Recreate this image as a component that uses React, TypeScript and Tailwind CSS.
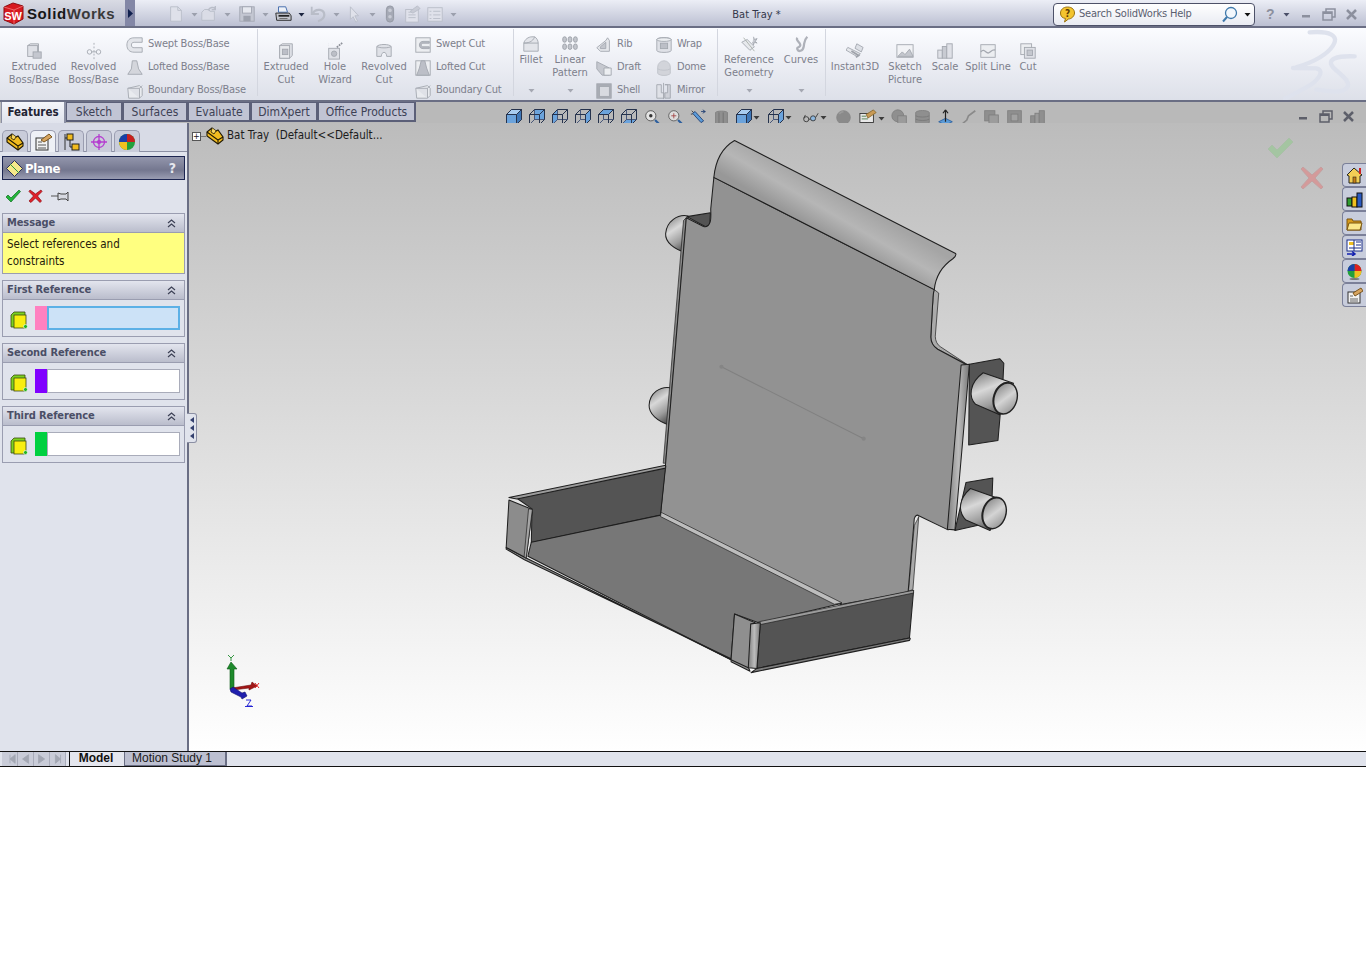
import type { ReactNode } from "react";

const g = { fill: "#dfe1e7", stroke: "#a4a8b0", strokeWidth: 1 };

function Ico({ size = 18, children }: { size?: number; children: ReactNode }) {
  return (
    <svg width={size} height={size} viewBox="0 0 20 20" className="shrink-0">
      {children}
    </svg>
  );
}

const ribbonIcons: Record<string, ReactNode> = {
  extrude: (
    <g {...g}>
      <path d="M3 4l3-2h9v11l-3 3" />
      <rect x="3" y="4" width="11" height="12" />
      <rect x="9" y="11" width="9" height="7" fill="#c4c7cf" />
    </g>
  ),
  revolve: (
    <g {...g} fill="none">
      <path d="M10 1v18" strokeDasharray="2 2" />
      <circle cx="5" cy="11" r="2.500" />
      <circle cx="15" cy="11" r="2.500" />
      <path d="M7 11h6" />
    </g>
  ),
  swept: (
    <g {...g} strokeWidth="1">
      <path d="M18 2H9C4 2 1 5 1 10s3 8 8 8h9v-5H9c-2 0-3-1-3-3s1-3 3-3h9z" fill="#e3e5ea" />
    </g>
  ),
  lofted: (
    <g {...g}>
      <path d="M7 2h5l2 9 4 6H2l4-6z" fill="#d4d6dc" />
    </g>
  ),
  boundary: (
    <g {...g}>
      <path d="M2 7l13-3 3 3v8l-3 3H3z" fill="#e9ebef" />
      <path d="M2 7h13v11M15 7l3-3" />
    </g>
  ),
  extrudeCut: (
    <g {...g}>
      <path d="M3 4l3-2h11v13l-3 3H3z" />
      <rect x="3" y="4" width="11" height="14" fill="#e8eaee" />
      <rect x="6" y="8" width="6" height="6" fill="#bcbfc7" />
    </g>
  ),
  hole: (
    <g {...g}>
      <rect x="3" y="7" width="12" height="12" />
      <circle cx="9" cy="13" r="3" fill="#bcbfc7" />
      <path d="M12 6l6-5" stroke="#8e929a" strokeDasharray="2 1" strokeWidth="2" />
      <path d="M3 2h.1M7 2h.1M3 4h.1" stroke="#8e929a" />
    </g>
  ),
  revolveCut: (
    <g {...g}>
      <path d="M2 5c2-3 14-3 16 0v11h-5c0-6-6-6-6 0H2z" />
      <path d="M2 5c3 2 13 2 16 0" fill="none" />
    </g>
  ),
  sweptCut: (
    <g {...g}>
      <rect x="2" y="2" width="16" height="16" fill="#eceef1" />
      <path d="M17 6H10c-3 0-4 2-4 4s1 4 4 4h7v-2h-7c-1 0-2-1-2-2s1-2 2-2h7z" fill="#b6b9c1" />
    </g>
  ),
  loftedCut: (
    <g {...g}>
      <rect x="2" y="2" width="16" height="16" fill="#eceef1" />
      <path d="M8 2h4l2 8 3 8H3l3-8z" fill="#bcbfc7" />
    </g>
  ),
  fillet: (
    <g {...g}>
      <path d="M2 9C3 5 7 2 11 2h3c2 1 4 4 4 7v9H2z" fill="#e3e5ea" />
      <path d="M2 9c4 0 10-1 12-7" fill="none" />
      <path d="M2 9h16" fill="none" />
    </g>
  ),
  pattern: (
    <g fill="#c3c6cd" stroke="#9a9ea6">
      {[4, 10, 16].map((x) => [5, 13].map((y) => <rect key={`${x}${y}`} x={x - 2} y={y - 3} width="4" height="6" rx="2" />))}
    </g>
  ),
  rib: (
    <g {...g}>
      <path d="M2 13l10-8 2-3 2 3v12H6z" fill="#e5e7eb" />
      <path d="M6 12l6-5v7H6z" fill="#c3c6cd" />
    </g>
  ),
  draft: (
    <g {...g}>
      <path d="M2 3l14 7v8H8L2 11z" fill="#c5c8cf" />
      <path d="M10 10h8v8h-8z" fill="#eceef1" />
    </g>
  ),
  shell: (
    <g {...g}>
      <rect x="2" y="2" width="16" height="16" fill="#a9acb4" />
      <rect x="5" y="5" width="11" height="11" fill="#d8dae0" />
    </g>
  ),
  wrap: (
    <g {...g}>
      <path d="M2 4c0-3 16-3 16 0v12c0 3-16 3-16 0z" />
      <ellipse cx="10" cy="4" rx="8" ry="2" fill="#eceef1" />
      <rect x="6" y="8" width="8" height="6" fill="#bcbfc7" />
    </g>
  ),
  dome: (
    <g {...g} stroke="#c0c3ca">
      <path d="M3 9a7 7 0 0 1 14 0v7c-2 3-12 3-14 0z" fill="#d2d4da" />
      <path d="M3 11c3 2 11 2 14 0" fill="none" />
    </g>
  ),
  mirror: (
    <g {...g}>
      <path d="M2 3h5v9h3v6H2z" />
      <path d="M11 3h6v15h-6v-6h3V3z" fill="#cfd1d8" />
      <path d="M9.500 1v18" />
    </g>
  ),
  refGeom: (
    <g {...g}>
      <path d="M2 8l6-3 8 8-5 4z" fill="#e7e9ed" />
      <path d="M4 3l12 15" stroke="#a9b0a9" />
      <path d="M15 2l1 3 3-1-2 3 2 2-3-1-1 3-1-3" fill="#c6c9d0" />
    </g>
  ),
  curves: (
    <g fill="none" stroke="#aeb1b9" strokeWidth="2.500">
      <path d="M6 3c-3 3 5 6 3 9s-4 1-3 4 6 2 7-3 0-7 4-11" />
    </g>
  ),
  instant: (
    <g {...g}>
      <path d="M2 6l14 7-4 3L0 9z" fill="#e6e8ec" />
      <path d="M12 2l7 4-2 5-7-4z" fill="#dde0e6" />
      <path d="M6 10l8 5-3 2" stroke="#9ea2aa" strokeWidth="2" fill="none" />
    </g>
  ),
  picture: (
    <g {...g}>
      <rect x="1" y="3" width="18" height="14" fill="#f2f3f6" />
      <path d="M2 16l5-5 3 3 5-6 4 8z" fill="#c4c7ce" />
    </g>
  ),
  scale: (
    <g {...g}>
      <rect x="2" y="9" width="5" height="9" />
      <rect x="7" y="5" width="5" height="13" fill="#c8cbd2" />
      <rect x="12" y="2" width="6" height="16" />
    </g>
  ),
  split: (
    <g {...g}>
      <rect x="2" y="3" width="16" height="14" fill="#eceef1" />
      <path d="M2 11c4-5 6 3 9 1s4-4 7-3" fill="none" strokeWidth="1.500" />
    </g>
  ),
  cut: (
    <g {...g}>
      <rect x="2" y="2" width="12" height="12" fill="#eceef1" />
      <rect x="6" y="6" width="12" height="12" />
      <rect x="9" y="9" width="6" height="6" fill="#c4c7ce" />
    </g>
  ),
};

function Caret({ color = "#8f93a0", size = 5 }: { color?: string; size?: number }) {
  return (
    <svg width={size + 2} height={size} viewBox="0 0 7 5" className="shrink-0">
      <path d="M0.500 1h6L3.500 4.500z" fill={color} />
    </svg>
  );
}

function BigBtn({
  w,
  icon,
  lines,
  high,
  caret,
}: {
  w: string;
  icon: string;
  lines: string[];
  high?: boolean;
  caret?: boolean;
}) {
  return (
    <div className={`${w} shrink-0 h-full flex flex-col items-center ${high ? "pt-[6px]" : "pt-[13px]"}`}>
      <Ico>{ribbonIcons[icon]}</Ico>
      {lines.map((l) => (
        <span key={l} className="leading-[13px] whitespace-nowrap">
          {l}
        </span>
      ))}
      {caret && (
        <span className="mt-auto mb-[3px]">
          <Caret color="#a5a8b2" />
        </span>
      )}
    </div>
  );
}

function SmallCol({ w, items }: { w: string; items: [string, string][] }) {
  return (
    <div className={`${w} shrink-0 pt-[4px] flex flex-col`}>
      {items.map(([icon, label]) => (
        <div key={label} className="h-[23px] shrink-0 flex items-center">
          <div className="w-[20px] flex justify-center">
            <Ico>{ribbonIcons[icon]}</Ico>
          </div>
          <span className="ml-[3px] whitespace-nowrap tracking-[-0.2px]">{label}</span>
        </div>
      ))}
    </div>
  );
}

function Ribbon() {
  return (
    <div className="h-[74px] pt-px flex border-b-2 border-[#6a6e84] bg-linear-to-b from-[#fbfcff] to-[#dde0e9] text-[#7d808c] text-[11px] overflow-hidden">
      <div className="w-[258px] shrink-0 pl-[5px] flex border-r border-[#d3d6df] mb-[4px]">
        <BigBtn w="w-[58px]" icon="extrude" lines={["Extruded", "Boss/Base"]} />
        <BigBtn w="w-[61px]" icon="revolve" lines={["Revolved", "Boss/Base"]} />
        <SmallCol
          w="ml-px w-[132px]"
          items={[
            ["swept", "Swept Boss/Base"],
            ["lofted", "Lofted Boss/Base"],
            ["boundary", "Boundary Boss/Base"],
          ]}
        />
      </div>
      <div className="w-[256px] shrink-0 flex border-r border-[#d3d6df] mb-[4px]">
        <BigBtn w="w-[56px]" icon="extrudeCut" lines={["Extruded", "Cut"]} />
        <BigBtn w="w-[42px]" icon="hole" lines={["Hole", "Wizard"]} />
        <BigBtn w="w-[56px]" icon="revolveCut" lines={["Revolved", "Cut"]} />
        <SmallCol
          w="ml-px w-[100px]"
          items={[
            ["sweptCut", "Swept Cut"],
            ["loftedCut", "Lofted Cut"],
            ["boundary", "Boundary Cut"],
          ]}
        />
      </div>
      <div className="w-[204px] shrink-0 flex border-r border-[#d3d6df] mb-[4px]">
        <BigBtn w="w-[34px]" icon="fillet" lines={["Fillet"]} high caret />
        <BigBtn w="w-[44px]" icon="pattern" lines={["Linear", "Pattern"]} high caret />
        <SmallCol
          w="ml-[2px] w-[60px]"
          items={[
            ["rib", "Rib"],
            ["draft", "Draft"],
            ["shell", "Shell"],
          ]}
        />
        <SmallCol
          w="w-[60px]"
          items={[
            ["wrap", "Wrap"],
            ["dome", "Dome"],
            ["mirror", "Mirror"],
          ]}
        />
      </div>
      <div className="w-[108px] shrink-0 flex border-r border-[#d3d6df] mb-[4px]">
        <BigBtn w="w-[62px]" icon="refGeom" lines={["Reference", "Geometry"]} high caret />
        <BigBtn w="w-[42px]" icon="curves" lines={["Curves"]} high caret />
      </div>
      <div className="pl-[3px] flex">
        <BigBtn w="w-[52px]" icon="instant" lines={["Instant3D"]} />
        <BigBtn w="w-[48px]" icon="picture" lines={["Sketch", "Picture"]} />
        <BigBtn w="w-[32px]" icon="scale" lines={["Scale"]} />
        <BigBtn w="w-[54px]" icon="split" lines={["Split Line"]} />
        <BigBtn w="w-[26px]" icon="cut" lines={["Cut"]} />
      </div>
      <svg width="74" height="71" viewBox="730 90 222 213" className="ml-auto mr-[9px] shrink-0" fill="none" stroke="#dee2ed" strokeWidth="13" strokeLinecap="round">
        <path d="M810 100c60-5 90 10 70 40-20 30-60 50-110 65" />
        <path d="M760 207l70 1c30 7 0 42-30 57l-65 35" />
        <path d="M945 172c-55-2-85 8-65 33 20 20 60 45 40 63-20 17-60 7-90 4" />
      </svg>
    </div>
  );
}

function Cube({ face }: { face: string }) {
  const blue = "#6ba3dc";
  return (
    <svg width="16" height="16" viewBox="0 0 16 16" className="shrink-0" fill="none" stroke="#26334d" strokeWidth="1">
      {face === "back" && <rect x="5.500" y="0.500" width="10" height="10" fill={blue} />}
      {face === "bottom" && <path d="M0.500 15.500l5-5h10l-5 5z" fill={blue} />}
      {face === "left" && <path d="M0.500 5.500l5-5v10l-5 5z" fill={blue} />}
      <path d="M0.500 5.500l5-5h10v10l-5 5h-10z" />
      <path d="M5.500 0.500v10h10M5.500 10.500l-5 5" stroke="#49587a" />
      <path d="M0.500 5.500h10v10M10.500 5.500l5-5" />
      {face === "front" && <rect x="0.500" y="5.500" width="10" height="10" fill={blue} />}
      {face === "front" && <path d="M0.500 5.500l5-5h10l-5 5z" fill="#a9cdf0" />}
      {face === "front" && <path d="M10.500 5.500l5-5v10l-5 5z" fill="#3f78b8" />}
      {face === "right" && <path d="M10.500 5.500l5-5v10l-5 5z" fill={blue} />}
      {face === "top" && <path d="M0.500 5.500l5-5h10l-5 5z" fill={blue} />}
    </svg>
  );
}

const grey = { fill: "#8f8f8f", stroke: "#7e7e7e" };

const headsUp: { w: string; icon: ReactNode; caret?: boolean }[] = [
  { w: "w-[23px]", icon: <Cube face="front" /> },
  { w: "w-[23px]", icon: <Cube face="back" /> },
  { w: "w-[23px]", icon: <Cube face="left" /> },
  { w: "w-[23px]", icon: <Cube face="right" /> },
  { w: "w-[23px]", icon: <Cube face="top" /> },
  { w: "w-[23px]", icon: <Cube face="bottom" /> },
  {
    w: "w-[23px]",
    icon: (
      <Ico size={17}>
        <circle cx="8" cy="8" r="6" fill="#e4e4e4" stroke="#4a4a4a" />
        <circle cx="8" cy="8" r="2" fill="#333" />
        <path d="M13 13l5 5" stroke="#2d5f9e" strokeWidth="2.500" />
      </Ico>
    ),
  },
  {
    w: "w-[23px]",
    icon: (
      <Ico size={17}>
        <circle cx="8" cy="8" r="6" fill="#ddd" stroke="#555" />
        <path d="M5 8h6M8 5v6" stroke="#a04040" />
        <path d="M13 13l5 5" stroke="#2d5f9e" strokeWidth="2.500" />
      </Ico>
    ),
  },
  {
    w: "w-[23px]",
    icon: (
      <Ico size={17}>
        <path d="M3 5l10 11 3-2L6 3z" fill="#5b9bd8" stroke="#1e3c70" />
        <path d="M13 3h5M18 3l-3-2M18 3l-3 2" stroke="#1e3c70" fill="none" />
        <path d="M2 2l2 2M1 6h2" stroke="#333" />
      </Ico>
    ),
  },
  {
    w: "w-[23px]",
    icon: (
      <Ico size={17}>
        <path d="M3 4c2-2 12-2 14 0v13c-2 2-12 2-14 0z" {...grey} />
        <path d="M7 4v14M12 4v14" stroke="#707070" />
      </Ico>
    ),
  },
  {
    w: "w-[32px]",
    caret: true,
    icon: <Cube face="front" />,
  },
  {
    w: "w-[34px]",
    caret: true,
    icon: <Cube face="right" />,
  },
  {
    w: "w-[33px]",
    caret: true,
    icon: (
      <Ico size={17}>
        <circle cx="5" cy="12" r="3" fill="none" stroke="#333" />
        <circle cx="13" cy="11" r="3" fill="#8eb8e0" stroke="#333" />
        <path d="M8 12h2M16 10l3-5M2 11l2-4" stroke="#333" fill="none" />
      </Ico>
    ),
  },
  {
    w: "w-[24px]",
    icon: (
      <Ico size={17}>
        <circle cx="10" cy="10" r="8" fill="#8a8a8a" stroke="#858585" />
        <path d="M5 6a6 6 0 0 1 5-3" stroke="#9b9b9b" fill="none" strokeWidth="2" />
      </Ico>
    ),
  },
  {
    w: "w-[32px]",
    caret: true,
    icon: (
      <Ico size={18}>
        <rect x="1" y="5" width="15" height="10" fill="#e8e8e8" stroke="#333" />
        <path d="M5 19h7M8 15v4" stroke="#333" />
        <path d="M8 6l8-5 3 3-9 6z" fill="#c99a55" stroke="#8a6a30" />
        <path d="M3 8h5M3 11h7" stroke="#4d7d4d" />
      </Ico>
    ),
  },
  {
    w: "w-[23px]",
    icon: (
      <Ico size={17}>
        <circle cx="8" cy="8" r="7" {...grey} />
        <rect x="8" y="8" width="10" height="10" fill="#9b9b9b" stroke="#7e7e7e" />
      </Ico>
    ),
  },
  {
    w: "w-[23px]",
    icon: (
      <Ico size={17}>
        <path d="M2 4c2-3 14-3 16 0v12c-2 3-14 3-16 0z" {...grey} />
        <path d="M2 8c3 2 13 2 16 0M2 12c3 2 13 2 16 0" fill="none" stroke="#777" />
      </Ico>
    ),
  },
  {
    w: "w-[23px]",
    icon: (
      <Ico size={17}>
        <path d="M2 15l8-4 8 4-8 4z" fill="#5b9bd8" stroke="#2b5f9e" />
        <path d="M10 15V2M10 1l-3 4M10 1l3 4" stroke="#222" fill="none" strokeWidth="1.400" />
      </Ico>
    ),
  },
  {
    w: "w-[23px]",
    icon: (
      <Ico size={17}>
        <path d="M2 18l6-5 2-5 8-6" stroke="#8a8a8a" strokeWidth="2" fill="none" />
      </Ico>
    ),
  },
  {
    w: "w-[23px]",
    icon: (
      <Ico size={17}>
        <rect x="2" y="2" width="12" height="12" {...grey} />
        <rect x="7" y="7" width="11" height="11" fill="#9c9c9c" stroke="#7e7e7e" />
      </Ico>
    ),
  },
  {
    w: "w-[23px]",
    icon: (
      <Ico size={17}>
        <rect x="2" y="2" width="16" height="16" {...grey} />
        <rect x="6" y="6" width="8" height="8" fill="#a2a2a2" stroke="#7e7e7e" />
      </Ico>
    ),
  },
  {
    w: "w-[23px]",
    icon: (
      <Ico size={17}>
        <rect x="2" y="8" width="5" height="10" {...grey} />
        <rect x="7" y="5" width="5" height="13" fill="#9b9b9b" stroke="#7e7e7e" />
        <rect x="12" y="2" width="6" height="16" {...grey} />
      </Ico>
    ),
  },
];

function WindowButtons({ color }: { color: string }) {
  return (
    <div className="flex items-center gap-[9px]">
      <svg width="13" height="13" viewBox="0 0 13 13">
        <rect x="2" y="7" width="8" height="2.500" fill={color} />
      </svg>
      <svg width="14" height="13" viewBox="0 0 14 13" fill="none" stroke={color} strokeWidth="1.500">
        <rect x="1" y="4" width="9" height="8" />
        <path d="M4 4V1h9v8h-3" />
        <path d="M1 5h9" strokeWidth="2" />
      </svg>
      <svg width="13" height="13" viewBox="0 0 13 13" stroke={color} strokeWidth="2.500">
        <path d="M2 2l9 9M11 2l-9 9" />
      </svg>
    </div>
  );
}

function TitleBar() {
  const tool = "#b9bdc8";
  const items: { w: string; icon: ReactNode; caret?: string }[] = [
    {
      w: "w-[33px]",
      caret: "#9ca0ad",
      icon: (
        <Ico>
          <path d="M4 2h8l4 4v12H4z" fill="#dfe1ea" stroke={tool} />
          <path d="M12 2v4h4" fill="none" stroke={tool} />
        </Ico>
      ),
    },
    {
      w: "w-[38px]",
      caret: "#9ca0ad",
      icon: (
        <Ico>
          <path d="M2 8l3-3h5l1 2h5v10H2z" fill="#dadce6" stroke={tool} />
          <path d="M9 6c2-4 6-4 8-2M17 1v4h-4" fill="none" stroke={tool} strokeWidth="1.500" />
        </Ico>
      ),
    },
    {
      w: "w-[36px]",
      caret: "#9ca0ad",
      icon: (
        <Ico>
          <rect x="2" y="2" width="16" height="16" fill="#c4c7d2" stroke="#a3a7b3" />
          <rect x="5" y="2" width="10" height="7" fill="#e6e8ef" stroke="#a3a7b3" />
          <rect x="6" y="12" width="8" height="6" fill="#9ea2ae" />
        </Ico>
      ),
    },
    {
      w: "w-[35px]",
      caret: "#1c2540",
      icon: (
        <Ico>
          <path d="M5 2h8l2 6H5z" fill="#eef1f7" stroke="#3a64a8" />
          <path d="M2 9h15l2 3v5H3z" fill="#c5c7cf" stroke="#222" />
          <path d="M5 12h12" stroke="#222" strokeWidth="2" />
          <path d="M6 15h9" stroke="#666" />
        </Ico>
      ),
    },
    {
      w: "w-[36px]",
      caret: "#9ca0ad",
      icon: (
        <Ico>
          <path d="M3 2v8h8" fill="none" stroke={tool} strokeWidth="2" />
          <path d="M4 9c4-6 13-4 13 2 0 4-4 6-7 7" fill="none" stroke={tool} strokeWidth="2.500" />
        </Ico>
      ),
    },
    {
      w: "w-[36px]",
      caret: "#9ca0ad",
      icon: (
        <Ico>
          <path d="M6 2v14l3-3 3 6 2-1-3-6h4z" fill="#dfe1ea" stroke={tool} />
        </Ico>
      ),
    },
    {
      w: "w-[22px]",
      icon: (
        <Ico>
          <rect x="6" y="1" width="8" height="18" rx="4" fill="#a5a9b5" stroke="#9296a2" />
          <circle cx="10" cy="6" r="2" fill="#c8cbd5" />
          <circle cx="10" cy="13" r="2" fill="#c8cbd5" />
        </Ico>
      ),
    },
    {
      w: "w-[23px]",
      icon: (
        <Ico>
          <rect x="3" y="5" width="14" height="14" fill="#dfe1ea" stroke={tool} />
          <path d="M6 8h4M6 11h8M6 14h8" stroke={tool} />
          <path d="M8 7l8-6 3 3-8 5z" fill="#c8cbd5" stroke={tool} />
        </Ico>
      ),
    },
    {
      w: "w-[30px]",
      caret: "#9ca0ad",
      icon: (
        <Ico>
          <rect x="2" y="3" width="16" height="15" fill="#dfe1ea" stroke={tool} />
          <path d="M4 7h2M8 7h8M4 11h2M8 11h8M4 15h2M8 15h8" stroke={tool} />
        </Ico>
      ),
    },
  ];
  return (
    <div className="h-[28px] flex items-center border-b-2 border-[#6a6e84] bg-linear-to-b from-[#eceef6] to-[#bcc0d2] text-[#33374a]">
      <div className="w-[125px] h-full shrink-0 flex items-center bg-linear-to-b from-[#d9dbe4] to-[#b6b9cb]">
        <svg width="23" height="23" viewBox="0 0 23 23" className="ml-[2px] shrink-0">
          <path d="M2 5l9-4 10 3v13l-9 5-10-4z" fill="#d7191f" stroke="#8e0e12" />
          <path d="M2 5l10 3 9-4M12 8v14" fill="none" stroke="#f48a8a" strokeWidth=".7" />
          <text x="11" y="18" textAnchor="middle" fontSize="11" fontWeight="700" fill="#fff" fontFamily="Liberation Sans, sans-serif">
            SW
          </text>
        </svg>
        <span className="ml-[2px] text-[15px] leading-none font-bold tracking-[0.6px] font-['Liberation_Sans',sans-serif] text-[#161616]">
          Solid<span className="text-[#3a3a3a]">Works</span>
        </span>
      </div>
      <div className="w-[10px] h-full shrink-0 bg-[#8387a6] flex items-center justify-center">
        <svg width="5" height="9" viewBox="0 0 5 9">
          <path d="M0 0l5 4.500L0 9z" fill="#10204e" />
        </svg>
      </div>
      <div className="ml-[32px] mt-[2px] flex items-center">
        {items.map((it, i) => (
          <div key={i} className={`${it.w} shrink-0 flex items-center`}>
            {it.icon}
            {it.caret && (
              <span className="ml-[6px]">
                <Caret color={it.caret} />
              </span>
            )}
          </div>
        ))}
      </div>
      <div className="flex-1 mt-[5px] pl-[4px] text-center text-[11px] text-[#33374a] whitespace-nowrap">Bat Tray *</div>
      <div className="w-[202px] h-[23px] mt-[2px] shrink-0 flex items-center rounded-[4px] border border-[#4d5168] bg-linear-to-b from-white to-[#e9ebf2]">
        <svg width="17" height="17" viewBox="0 0 17 17" className="ml-[5px] shrink-0">
          <path d="M8.500 1c5 0 7 3 7 6s-3 6-6 6l-4 3 1-3.500C3 12 1.500 10 1.500 7S4 1 8.500 1z" fill="#f3c42e" stroke="#9a7310" />
          <text x="8.500" y="11" textAnchor="middle" fontSize="10" fontWeight="700" fill="#5a3b05">
            ?
          </text>
        </svg>
        <span className="ml-[3px] mt-[1px] text-[11px] tracking-[-0.2px] text-[#5a5e70] whitespace-nowrap">Search SolidWorks Help</span>
        <svg width="17" height="17" viewBox="0 0 17 17" className="ml-auto shrink-0" fill="none">
          <circle cx="10" cy="7" r="5.500" fill="#f2f7fc" stroke="#3f79ab" strokeWidth="1.300" />
          <path d="M6 11l-4 4.500" stroke="#3f79ab" strokeWidth="2" />
        </svg>
        <span className="ml-[6px] mr-[3px]">
          <Caret color="#111" />
        </span>
      </div>
      <span className="ml-[11px] mt-[2px] w-[17px] text-[14px] font-bold leading-none text-[#8c909e] font-['Liberation_Sans',sans-serif]">?</span>
      <span className="mt-[2px]">
        <Caret color="#4a4f68" />
      </span>
      <div className="ml-[10px] mr-[8px] mt-[2px]">
        <WindowButtons color="#8c909e" />
      </div>
    </div>
  );
}

function TabsRow() {
  const tabs = [
    ["Sketch", "w-[57px]"],
    ["Surfaces", "w-[65px]"],
    ["Evaluate", "w-[63px]"],
    ["DimXpert", "w-[67px]"],
    ["Office Products", "w-[98px]"],
  ];
  return (
    <div className="h-[21px] flex bg-[#b9b9b9] text-[12px]">
      <div className="ml-px w-[65px] h-[21px] flex items-center justify-center bg-linear-to-b from-[#f4f5fa] to-[#e0e3ec] border-l border-r-2 border-[#8b8fa3] text-[11.500px] font-bold text-[#1f2333]">
        Features
      </div>
      {tabs.map(([t, w]) => (
        <div key={t} className={`${w} h-[20px] flex items-center justify-center bg-[#c1c4d4] border border-r-2 border-b-2 border-[#5b5f78] text-[#3d4155]`}>
          {t}
        </div>
      ))}
      <div className="ml-[90px] mt-[7px] flex items-start h-[17px]">
        {headsUp.map((h, i) => (
          <div key={i} className={`${h.w} shrink-0 flex items-center`}>
            {h.icon}
            {h.caret && (
              <span className="ml-px">
                <Caret color="#3c3c3c" />
              </span>
            )}
          </div>
        ))}
      </div>
      <div className="ml-auto mr-[11px] mt-[8px] h-[13px]">
        <WindowButtons color="#5d5f6a" />
      </div>
    </div>
  );
}

function PartIcon({ size = 18 }: { size?: number }) {
  return (
    <svg width={size} height={size} viewBox="0 0 18 18" className="shrink-0">
      <path d="M1 5l5-4 4 3 2-1 5 7v3l-5 4-11-8z" fill="#f1bb1f" stroke="#1f1804" strokeWidth="1.100" />
      <path d="M1 5l11 8v4M12 13l5-3" fill="none" stroke="#1f1804" strokeWidth="1.100" />
      <path d="M6 1l-1 4 3 2 2-3" fill="#f8d660" stroke="#1f1804" strokeWidth=".8" />
    </svg>
  );
}

function RefGroup({ title, swatch, active }: { title: string; swatch: string; active?: boolean }) {
  return (
    <GroupBox title={title}>
      <div className="h-[36px] pt-[6px] flex">
        <svg width="18" height="18" viewBox="0 0 18 18" className="ml-[7px] mr-[7px] mt-[5px] shrink-0">
          <path d="M1 4l3-3h11v3l-4 12H1z" fill="#7cd120" stroke="#3a4a10" strokeWidth=".8" />
          <rect x="4" y="4" width="12" height="13" fill="#f8ee10" stroke="#3a4a10" strokeWidth=".8" />
          <circle cx="15.500" cy="15.500" r="2" fill="#22b322" stroke="#fff" strokeWidth=".6" />
        </svg>
        <div className={`w-[12px] h-[24px] shrink-0 ${swatch}`} />
        <div
          className={`w-[133px] h-[24px] shrink-0 ${
            active ? "bg-[#cce2f7] border border-[#5cb0e6] outline outline-[#5cb0e6] -outline-offset-2" : "bg-white border border-[#a9acba]"
          }`}
        />
      </div>
    </GroupBox>
  );
}

function GroupBox({ title, children }: { title: string; children: ReactNode }) {
  return (
    <div className="ml-[2px] w-[183px] mb-[6px] border border-[#9a9db0]">
      <div className="h-[19px] flex items-center justify-between pl-[4px] pr-[8px] border-b border-[#9a9db0] bg-linear-to-b from-[#e3e5ee] to-[#babdcc] text-[11px] tracking-[-0.1px] font-bold text-[#4a4e66]">
        {title}
        <svg width="9" height="9" viewBox="0 0 9 9" fill="none" stroke="#3c4055" strokeWidth="1.200">
          <path d="M1 4l3.500-3L8 4M1 8l3.500-3L8 8" />
        </svg>
      </div>
      {children}
    </div>
  );
}

function LeftPanel() {
  const tabIcons: ReactNode[] = [
    <PartIcon key="a" />,
    <svg key="b" width="18" height="18" viewBox="0 0 18 18">
      <rect x="2" y="5" width="12" height="12" fill="#f2f2f2" stroke="#333" />
      <path d="M4 9h4M4 12h8M4 15h8" stroke="#555" />
      <path d="M7 7l8-6 3 3-8 5z" fill="#d7a45f" stroke="#7a5620" />
    </svg>,
    <svg key="c" width="18" height="18" viewBox="0 0 18 18">
      <path d="M3 1v16" stroke="#333" />
      <rect x="5" y="1" width="6" height="6" fill="#f1bb1f" stroke="#222" />
      <rect x="10" y="11" width="7" height="6" fill="#f1bb1f" stroke="#222" />
      <path d="M8 7v7h2M3 5h2" stroke="#222" fill="none" />
    </svg>,
    <svg key="d" width="18" height="18" viewBox="0 0 18 18" fill="none" stroke="#b53fd0" strokeWidth="1.300">
      <circle cx="9" cy="9" r="5.500" />
      <path d="M9 1v16M1 9h16" />
      <circle cx="9" cy="9" r="1.500" fill="#b53fd0" />
    </svg>,
    <svg key="e" width="18" height="18" viewBox="0 0 18 18">
      <circle cx="9" cy="9" r="8" fill="#22a03c" />
      <path d="M9 1a8 8 0 0 1 8 8H9z" fill="#c82020" />
      <path d="M1 9a8 8 0 0 1 8-8v8z" fill="#1c3fa8" />
      <path d="M1 9h8v8a8 8 0 0 1-8-8z" fill="#f0c020" />
    </svg>,
  ];
  return (
    <div className="relative z-10 w-[189px] shrink-0 h-full border-r-2 border-[#6a6e84] bg-[#e0e3ec] text-[12px]">
      <div className="h-[29px] pt-[7px] pl-[2px] flex gap-[2px] border-b border-[#8b8fa3] bg-[#d8dbe6]">
        {tabIcons.map((ic, i) => (
          <div
            key={i}
            className={`w-[26px] h-[22px] flex items-center justify-center rounded-t-[5px] border border-b-0 border-[#9a9db0] ${
              i === 1 ? "bg-[#eef0f6]" : "bg-[#c9ccda]"
            }`}
          >
            {ic}
          </div>
        ))}
      </div>
      <div className="ml-[2px] mt-[4px] w-[183px] h-[24px] flex items-center border border-[#1c2550] bg-[linear-gradient(#9396ac,#74778f_60%,#9a9db2)] text-white">
        <svg width="19" height="19" viewBox="0 0 19 19" className="ml-[2px] shrink-0">
          <path d="M9.500 1.500l8 8-8 8-8-8z" fill="#f6e98a" stroke="#2b3058" />
          <path d="M5 5l9 9" stroke="#2f9a3a" />
        </svg>
        <span className="ml-px mt-[2px] text-[13px] font-bold tracking-[-0.3px]">Plane</span>
        <span className="ml-auto mr-[8px] text-[14px] font-bold text-[#e6e7ee]">?</span>
      </div>
      <div className="h-[33px] flex items-center pl-[5px] pb-[2px] gap-[7px]">
        <svg width="16" height="14" viewBox="0 0 16 14">
          <path d="M1 8l2-2 3 3 8-8 1.500 1.500L6 13z" fill="#22b53a" stroke="#0d6d1f" strokeWidth=".7" />
        </svg>
        <svg width="15" height="14" viewBox="0 0 15 14">
          <path d="M2 1l5.500 4L13 1l1 1.500L9.500 7l4 5-1.500 1.500L7.500 9 3 13.500 1 12l4.500-5L1 2.500z" fill="#e0202a" stroke="#8a0c12" strokeWidth=".7" />
        </svg>
        <svg width="19" height="12" viewBox="0 0 19 12" className="ml-[1px]">
          <path d="M0 6h7" stroke="#555" />
          <path d="M7 3l3 1h5l2-2v9l-2-2h-5l-3 1z" fill="#d8dae2" stroke="#444" />
        </svg>
      </div>
      <GroupBox title="Message">
        <div className="h-[40px] bg-[#ffff80] pl-[4px] pr-2 pt-[3px] leading-[17px] text-[#26200a] text-[11.500px]">
          Select references and constraints
        </div>
      </GroupBox>
      <RefGroup title="First Reference" swatch="bg-[#ff80c0]" active />
      <RefGroup title="Second Reference" swatch="bg-[#8000ff]" />
      <RefGroup title="Third Reference" swatch="bg-[#00d040]" />
      {/* collapse handle sits over the sash */}
      <div className="absolute left-[187px] top-[290px] w-[10px] h-[30px] flex flex-col items-center justify-center gap-[2px] rounded-r-[3px] border border-l-0 border-[#8b8fa3] bg-[#e0e3ec]">
        {[0, 1, 2].map((i) => (
          <svg key={i} width="4" height="6" viewBox="0 0 4 6">
            <path d="M4 0v6L0 3z" fill="#33406e" />
          </svg>
        ))}
      </div>
    </div>
  );
}

function Boss({ cx, cy, body }: { cx: number; cy: number; body: string }) {
  const line = { stroke: "#1f1f1f", strokeWidth: 3, strokeLinejoin: "round" as const };
  return (
    <>
      <path d={body} fill="url(#cyl)" {...line} />
      <ellipse cx={cx} cy={cy} rx="36" ry="48" transform={`rotate(18 ${cx} ${cy})`} fill="#222" />
      <ellipse cx={cx + 1} cy={cy} rx="31" ry="43" transform={`rotate(18 ${cx} ${cy})`} fill="url(#end)" />
    </>
  );
}

function Model() {
  const line = { stroke: "#1f1f1f", strokeWidth: 3, strokeLinejoin: "round" as const };
  const dark = "#545454";
  return (
    <svg width="540" height="550" viewBox="0 0 1568 1568" preserveAspectRatio="none" className="absolute left-[301px] top-[7px]">
      <defs>
        <linearGradient id="curl" gradientUnits="userSpaceOnUse" x1="1030" y1="190" x2="970" y2="295">
          <stop offset="0" stopColor="#a5a5a5" />
          <stop offset="0.5" stopColor="#b6b6b6" />
          <stop offset="1" stopColor="#989898" />
        </linearGradient>
        <linearGradient id="cyl" x1="0.3" y1="0" x2="0.7" y2="1">
          <stop offset="0" stopColor="#8c8c8c" />
          <stop offset="0.35" stopColor="#d8d8d8" />
          <stop offset="0.7" stopColor="#9d9d9d" />
          <stop offset="1" stopColor="#4e4e4e" />
        </linearGradient>
        <linearGradient id="end" x1="0" y1="0" x2="1" y2="1">
          <stop offset="0" stopColor="#7f7f7f" />
          <stop offset="0.5" stopColor="#d4d4d4" />
          <stop offset="1" stopColor="#8a8a8a" />
        </linearGradient>
        <linearGradient id="strip" x1="0" y1="0" x2="1" y2="0">
          <stop offset="0" stopColor="#7d7d7d" />
          <stop offset="0.5" stopColor="#bcbcbc" />
          <stop offset="1" stopColor="#777" />
        </linearGradient>
      </defs>

      {/* left pins, behind the plate */}
      <path d="M575 245c-30-6-62 15-65 50-2 25 25 45 60 55z" fill="url(#cyl)" {...line} />
      <path d="M525 735c-30-6-62 15-63 50-1 25 25 45 55 55z" fill="url(#cyl)" {...line} />
      <path d="M572 247l68-11-2 35-12 5z" fill={dark} {...line} />

      {/* right tabs */}
      <path d="M1392 668l88-16 12 13-3 60-14 160-85 13z" fill={dark} {...line} />
      <path d="M1382 1005l78-13-2 50-18 80-90 20z" fill={dark} {...line} />

      {/* plate thickness, seen along the cut edges */}
      <path d="M570 250l-60 700h-7l59-692z" fill="#8a8a8a" {...line} strokeWidth={2} />
      <path d="M1290 455l13 10-10 123c0 12 5 24 15 30l77 50-85-43c-15-10-20-20-20-35l5-90c2-15 0-30 5-45z" fill="#aaa" {...line} strokeWidth={2} />
      <path d="M1232 1128c3-8 8-13 13-26l-17 208-13 5z" fill="#aaa" {...line} strokeWidth={2} />

      {/* back plate */}
      <path
        d="M650 135L1290 455c-5 15-3 30-5 45l-5 90c0 15 5 25 20 35l85 45-55 470-85-40c-5-5-10 0-13 8l-18 210-195 35L495 1095l15-145 60-700 50 25c10 3 15-3 18-10 5-5 3-30 3-40z"
        fill="#929292"
        {...line}
      />

      {/* top curl */}
      <path d="M710 30L1352 352c3 5-2 10-8 15-30 20-50 50-54 88L650 135c5-50 25-85 60-105z" fill="url(#curl)" {...line} />

      {/* side strip */}
      <path d="M1368 670l24-2-42 472-22-2z" fill="url(#strip)" {...line} />

      {/* bosses on the right */}
      <Boss cx={1496} cy={765} body="M1432 692l88 30-40 90-70-30c-20-20-20-60 22-90z" />
      <Boss cx={1464} cy={1092} body="M1395 1022l92 32-35 88-70-30c-25-25-20-62 13-90z" />

      {/* tray floor and walls */}
      <path d="M78 1050l432-92-15 140-375 78 2-96z" fill={dark} {...line} />
      <path d="M55 1048l455-92v8L78 1052z" fill="#9c9c9c" {...line} />
      <path d="M495 1098l525 252-240 55-70-25-10 130-590-295 10-40z" fill="#777" {...line} />
      <path d="M497 1090l525 258-22 4-505-250z" fill="#bdbdbd" {...line} strokeWidth={2} />
      <path d="M47 1190l58 30 595 290v6l55 27-5-12L100 1225 47 1195z" fill="#8f8f8f" {...line} />
      <path d="M55 1055l68 27-18 138-58-30z" fill="#8c8c8c" {...line} />
      <path d="M112 1080l11 2-18 138-6-3z" fill="#a5a5a5" {...line} strokeWidth={2} />

      {/* front wall */}
      <path d="M785 1405l445-92-12 135-443 87z" fill={dark} {...line} />
      <path d="M780 1402l450-90v8L785 1410z" fill="#9c9c9c" {...line} strokeWidth={2} />
      <path d="M775 1535l443-87c3 0 3 3 0 7l-460 92z" fill="#7d7d7d" {...line} />
      <path d="M710 1380l60 25-20 128-50-23z" fill="#8f8f8f" {...line} />
      <path d="M757 1408l28-3-10 130-25-2z" fill="url(#strip)" {...line} />

      {/* sketch line */}
      <path d="M672 675L1085 880" stroke="#808080" strokeWidth="3" />
      <circle cx="672" cy="675" r="6" fill="#858585" />
      <circle cx="1085" cy="880" r="6" fill="#858585" />
    </svg>
  );
}

function TaskPane() {
  const icons: ReactNode[] = [
    <svg key="h" width="17" height="17" viewBox="0 0 17 17">
      <path d="M8 1L1 8l2 1v7h11V9l2-1z" fill="#f3cf55" stroke="#222" />
      <rect x="7" y="10" width="3" height="6" fill="#c77f12" stroke="#222" strokeWidth=".6" />
      <rect x="13" y="1" width="2" height="6" fill="#c22" />
    </svg>,
    <svg key="r" width="17" height="17" viewBox="0 0 17 17">
      <rect x="1" y="7" width="5" height="8" fill="#2f9c2f" stroke="#111" />
      <rect x="6" y="6" width="5" height="10" fill="#f0c020" stroke="#111" />
      <rect x="11" y="2" width="5" height="14" fill="#2a5ac0" stroke="#111" />
    </svg>,
    <svg key="f" width="17" height="17" viewBox="0 0 17 17">
      <path d="M1 4h5l1 2h8v9H1z" fill="#d69a1c" stroke="#7a5510" />
      <path d="M3 8h13l-2 7H1z" fill="#fbe78c" stroke="#7a5510" />
    </svg>,
    <svg key="v" width="17" height="17" viewBox="0 0 17 17">
      <rect x="1" y="1" width="15" height="11" fill="#fff" stroke="#1b2f88" />
      <rect x="3" y="3" width="5" height="3" fill="#f0c020" />
      <path d="M10 3h5M10 6h5M3 9h12M8 1v11" stroke="#1b2f88" />
      <path d="M1 15h7M6 12.500l3 2.500-3 2" stroke="#1320b0" strokeWidth="1.500" fill="none" />
    </svg>,
    <svg key="a" width="17" height="17" viewBox="0 0 17 17">
      <circle cx="8.500" cy="8" r="7" fill="#22a03c" />
      <path d="M8.500 1a7 7 0 0 1 7 7h-7z" fill="#e02020" />
      <path d="M1.500 8a7 7 0 0 1 7-7v7z" fill="#1c3fa8" />
      <path d="M8.500 8h7a7 7 0 0 1-7 7z" fill="#f0c020" />
      <ellipse cx="8.500" cy="16" rx="5" ry="1" fill="#777" />
    </svg>,
    <svg key="c" width="17" height="17" viewBox="0 0 17 17">
      <rect x="2" y="5" width="12" height="11" fill="#f2f2f2" stroke="#333" />
      <path d="M4 9h3M4 12h8M4 14h8" stroke="#666" />
      <path d="M7 6l8-5 2 3-8 5z" fill="#d7a45f" stroke="#7a5620" />
    </svg>,
  ];
  return (
    <div className="absolute right-0 top-[40px] flex flex-col">
      {icons.map((ic, i) => (
        <div key={i} className="w-[24px] h-[24px] flex items-center justify-center rounded-l-[4px] border border-r-0 border-[#7b8099] bg-[#c8cddc]">
          {ic}
        </div>
      ))}
    </div>
  );
}

function Triad() {
  return (
    <svg width="36" height="58" viewBox="0 0 36 58" className="absolute left-[36px] top-[530px]">
      <path d="M6 9l-4 7h3v20h4V16h3z" fill="#1e8a2c" stroke="#0e5a18" strokeWidth=".6" />
      <path d="M7 35l19-3 1-3 5 4-8 4v-2l-16 2z" fill="#a31616" stroke="#6d0c0c" strokeWidth=".6" />
      <path d="M5 36l3-2 9 6 3-1 2 4-5 3-1-2-10-5z" fill="#1f1fae" stroke="#11116d" strokeWidth=".6" />
      <path d="M3 2l3 3 3-3M6 5v3" stroke="#1e8a2c" fill="none" strokeWidth=".9" />
      <path d="M30 30l4 5M34 30l-4 5" stroke="#e01010" strokeWidth=".9" />
      <path d="M21 47h5l-4 6h5M20 53.500h8" stroke="#1515d0" fill="none" strokeWidth=".9" />
    </svg>
  );
}

function Viewport() {
  return (
    <div className="relative flex-1 h-full overflow-hidden bg-linear-to-b from-[#bcbcbc] to-white">
      <div className="absolute left-[3px] top-[4px] flex items-center text-[11.500px] text-[#1c1c1c] whitespace-pre">
        <span className="w-[9px] h-[9px] border border-[#555] bg-white flex items-center justify-center text-[9px] leading-none">+</span>
        <span className="w-[5px] h-px bg-[#777]" />
        <PartIcon />
        <span className="ml-[3px]">Bat Tray  (Default{"<<"}Default...</span>
      </div>
      <svg width="28" height="24" viewBox="0 0 28 24" className="absolute left-[1077px] top-[13px]">
        <path d="M2 13l4-4 5 5L23 2l4 4L11 22z" fill="#9ec79b" stroke="#a4c0a2" opacity=".8" />
      </svg>
      <svg width="24" height="24" viewBox="0 0 24 24" className="absolute left-[1111px] top-[43px]">
        <path d="M3 1l9 8 9-8 2 2-8 9 8 9-2 2-9-8-9 8-2-2 8-9-8-9z" fill="#d49a9a" stroke="#c4a0a0" />
      </svg>
      <TaskPane />
      <Model />
      <Triad />
    </div>
  );
}

function BottomBar() {
  return (
    <div className="h-[16px] flex border-t border-b border-[#111] bg-[#e0e3ec] font-['Liberation_Sans',sans-serif] text-[12px] leading-none">
      <div className="ml-[2px] w-[67px] flex">
        {["M7 1v10M7 6l6-5v10z", "M10 1v10L3 6z", "M3 1v10l7-5z", "M10 1v10M10 6L4 1v10z"].map((d, i) => (
          <div key={i} className="w-[16px] flex items-center justify-center border-r border-[#a9acba] bg-[#c9ccd8]">
            <svg width="12" height="12" viewBox="0 0 14 12">
              <path d={d} fill="#a3a7b3" stroke="#a3a7b3" />
            </svg>
          </div>
        ))}
      </div>
      <div className="w-[55px] pb-[2px] flex items-center justify-center pr-[2px] border-l border-[#111] bg-[#e4e6ee] font-bold text-[#111]">Model</div>
      <div className="w-[103px] pb-[2px] flex items-center pl-[7px] border border-t-0 border-r-2 border-[#6a6e84] bg-[#bcbfd0] text-[#1a1a1a]">Motion Study 1</div>
    </div>
  );
}

export default function App() {
  return (
    <div className="w-[1366px] h-[975px] bg-white overflow-hidden font-['DejaVu_Sans_Condensed','Noto_Sans',sans-serif]">
      <TitleBar />
      <Ribbon />
      <TabsRow />
      <div className="h-[628px] flex">
        <LeftPanel />
        <Viewport />
      </div>
      <BottomBar />
    </div>
  );
}
